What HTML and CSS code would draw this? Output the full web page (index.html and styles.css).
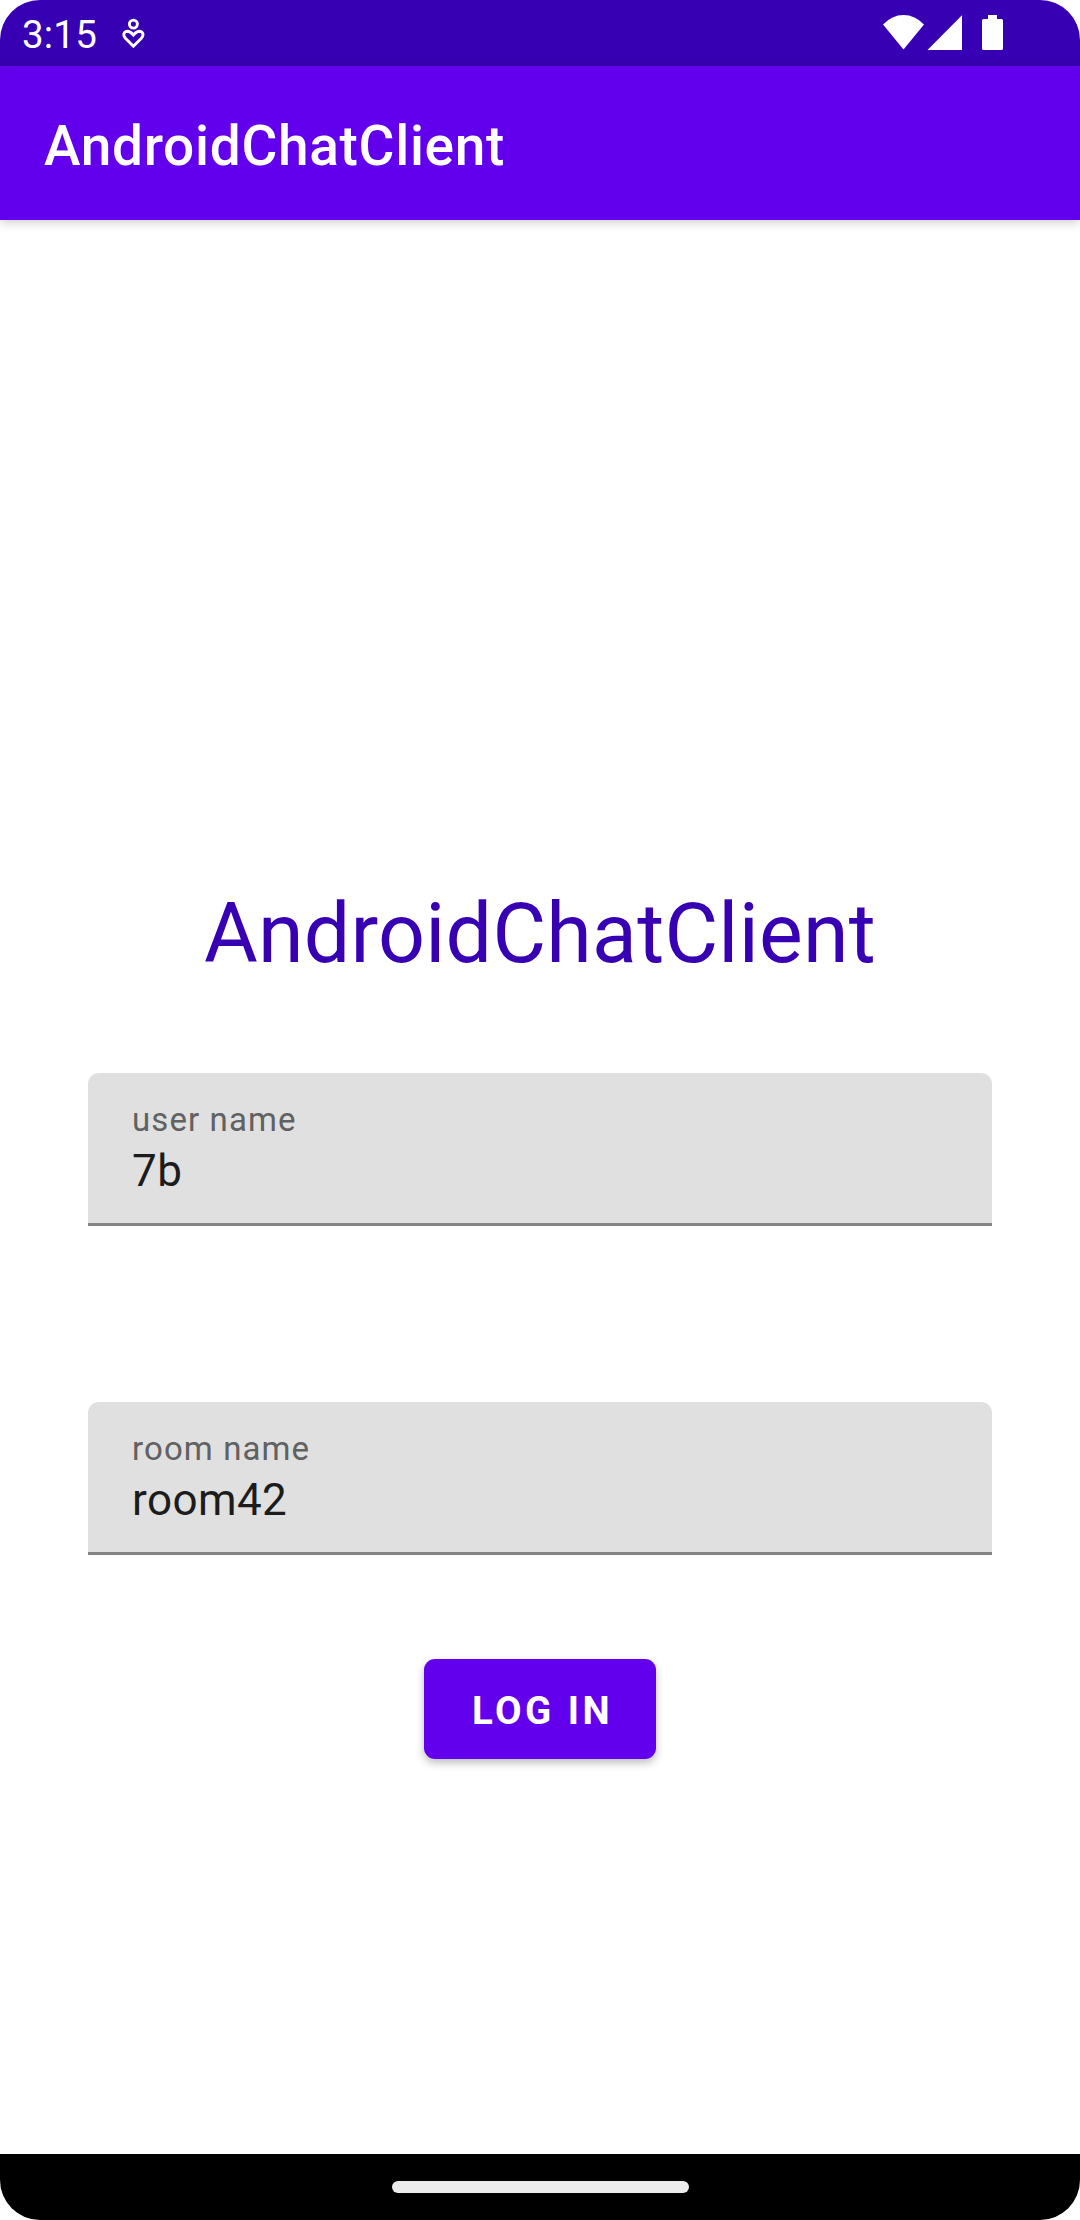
FILE: index.html
```html
<!DOCTYPE html>
<html lang="en">
<head>
<meta charset="utf-8">
<title>AndroidChatClient</title>
<link rel="stylesheet" href="styles.css">
</head>
<body>
<div class="screen">
  <div class="status-bar">
    <span class="clock">3:15</span>
    <svg class="notice" width="24" height="32" viewBox="0 0 24 32" fill="none" stroke="#fff">
      <circle cx="12.4" cy="6.1" r="4" stroke-width="2.9"/>
      <path d="M12.4 28.200L4.400 20.200C1.500 17 2.900 13.300 6.500 13.200C9.300 13.200 10.600 15 12.400 17C14.200 15 15.500 13.200 18.300 13.200C21.900 13.300 23.300 17 20.400 20.200Z" stroke-width="2.9"/>
    </svg>
    <svg class="system" width="122" height="36" viewBox="0 0 122 36" fill="#fff">
      <path d="M0 9.500Q9 0 20.500 0Q32 0 41 9.500L20.500 34.500Z"/>
      <path d="M79 .2V35H44.500Z"/>
      <path d="M105 0h9v4h4.500q1.500 0 1.500 1.500v28q0 1.500-1.500 1.500h-18q-1.500 0-1.500-1.500v-28q0-1.500 1.500-1.500h4.500z"/>
    </svg>
  </div>
  <header class="app-bar">AndroidChatClient</header>
  <main class="content">
    <h1 class="headline">AndroidChatClient</h1>
    <div class="field">
      <span class="label">user name</span>
      <span class="value">7b</span>
    </div>
    <div class="field">
      <span class="label">room name</span>
      <span class="value">room42</span>
    </div>
    <button class="login">LOG IN</button>
  </main>
  <div class="nav-bar"><span class="handle"></span></div>
</div>
</body>
</html>
```
FILE: styles.css
```css
* { box-sizing: border-box; }
body { margin: 0; background: #fff; font-family: Roboto, sans-serif; }
.screen {
  width: 1080px;
  height: 2220px;
  display: flex;
  flex-direction: column;
  border-radius: 40px;
  overflow: hidden;
}
.status-bar {
  height: 66px;
  display: flex;
  align-items: flex-start;
  background: #3700b3;
  color: #fff;
  padding: 0 75px 0 22px;
}
.clock { font-size: 38.5px; line-height: 45px; margin-top: 12px; width: 99px; letter-spacing: .2px; }
.notice { margin-top: 18px; }
.system { margin: 15px 0 0 auto; }
.app-bar {
  height: 154px;
  padding: 48px 44px 0;
  background: #6200ee;
  color: #fff;
  font-size: 55px;
  line-height: 64px;
  font-weight: 500;
  letter-spacing: .69px;
  box-shadow: 0 2px 10px rgba(0, 0, 0, .22);
}
.content {
  flex: 1;
  display: flex;
  flex-direction: column;
  align-items: center;
  padding-top: 665px;
}
.headline {
  margin: 0 0 90px;
  color: #3700b3;
  font-size: 82.5px;
  line-height: 98px;
  font-weight: 400;
  letter-spacing: .25px;
}
.field {
  width: 904px;
  height: 153px;
  display: flex;
  flex-direction: column;
  padding: 28px 44px 0;
  margin-bottom: 176px;
  background: #e0e0e0;
  border-bottom: 3px solid #848484;
  border-radius: 11px 11px 0 0;
}
.label {
  color: #616161;
  font-size: 33px;
  line-height: 38px;
  letter-spacing: 1.1px;
}
.value {
  color: #1c1c1c;
  font-size: 44px;
  line-height: 52px;
  margin-top: 6px;
  letter-spacing: .41px;
}
.login {
  margin-top: -72px;
  width: 232px;
  height: 100px;
  padding: 4px 0 0 5px;
  border: 0;
  border-radius: 11px;
  background: #6200ee;
  color: #fff;
  font: 700 38.5px/46px Roboto, sans-serif;
  letter-spacing: 3.44px;
  box-shadow: 0 4px 8px rgba(0, 0, 0, .26);
}
.nav-bar {
  height: 66px;
  display: flex;
  justify-content: center;
  padding-top: 27px;
  background: #000;
}
.handle { width: 297px; height: 12px; border-radius: 6px; background: #ececec; }
```
